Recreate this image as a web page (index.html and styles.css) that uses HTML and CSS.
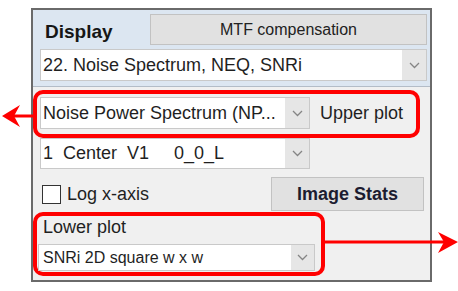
FILE: index.html
```html
<!DOCTYPE html>
<html>
<head>
	<title>Display panel</title>
	<link rel="stylesheet" href="styles.css">
</head>
<body>

	<!-- Control panel -->
	<div class="panel">

		<div class="top">
			<div class="row-head">
				<span class="title">Display</span>
				<div class="button button-mtf">MTF compensation</div>
			</div>
			<div class="select select-main">
				<span class="select-text">22. Noise Spectrum, NEQ, SNRi</span>
				<span class="select-arrow"><svg width="11" height="7" viewBox="0 0 11 7"><polyline points="1,1 5.5,5.5 10,1" fill="none" stroke="#858585" stroke-width="1.3"/></svg></span>
			</div>
		</div>

		<div class="mark mark-upper">
			<div class="select select-upper">
				<span class="select-text">Noise Power Spectrum (NP...</span>
				<span class="select-arrow"><svg width="11" height="7" viewBox="0 0 11 7"><polyline points="1,1 5.5,5.5 10,1" fill="none" stroke="#858585" stroke-width="1.3"/></svg></span>
			</div>
			<span class="label">Upper plot</span>
		</div>

		<div class="select select-roi">
			<span class="select-text">1  Center  V1     0_0_L</span>
			<span class="select-arrow"><svg width="11" height="7" viewBox="0 0 11 7"><polyline points="1,1 5.5,5.5 10,1" fill="none" stroke="#858585" stroke-width="1.3"/></svg></span>
		</div>

		<div class="row-check">
			<span class="checkbox"></span>
			<span class="label check-label">Log x-axis</span>
			<div class="button button-stats">Image Stats</div>
		</div>

		<div class="mark mark-lower">
			<div class="label lower-label">Lower plot</div>
			<div class="select select-lower">
				<span class="select-text">SNRi 2D square w x w</span>
				<span class="select-arrow"><svg width="11" height="7" viewBox="0 0 11 7"><polyline points="1,1 5.5,5.5 10,1" fill="none" stroke="#858585" stroke-width="1.3"/></svg></span>
			</div>
		</div>

	</div>

	<!-- Annotation arrows drawn over the page -->
	<svg class="arrows" width="458" height="291" viewBox="0 0 458 291">
		<line x1="14" y1="116" x2="34" y2="116" stroke="#ff0000" stroke-width="3"/>
		<polygon points="2,116 20,105 14,116 20,127" fill="#ff0000"/>
		<line x1="324" y1="242" x2="446" y2="242" stroke="#ff0000" stroke-width="3"/>
		<polygon points="458,242 438,232 444,242 438,253" fill="#ff0000"/>
	</svg>

</body>
</html>
```

FILE: styles.css
```css
body {
	margin: 0;
	font-family: "Liberation Sans", Arial, sans-serif;
	color: #1f1f1f;
	background-color: #ffffff;
	position: relative;
	width: 458px;
	height: 291px;
	overflow: hidden;
}

.panel {
	box-sizing: border-box;
	width: 401px;
	height: 274px;
	margin: 8px 0 0 31px;
	border: 2px solid #6a6a6a;
	background-color: #f0f0f0;
}

.top {
	box-sizing: border-box;
	height: 77px;
	padding: 4px 3px 0 7px;
	background-color: #dce6f1;
	border-bottom: 1px solid #b3bcc7;
}

.row-head {
	display: flex;
	height: 31px;
}

.title {
	flex: 1;
	margin: 7px 0 0 5px;
	font-size: 19px;
	font-weight: bold;
	color: #161616;
}

.button {
	box-sizing: border-box;
	display: flex;
	align-items: center;
	justify-content: center;
	background-color: #e1e1e1;
	border: 1px solid #c2c2c2;
	color: #222222;
}

.button-mtf {
	width: 277px;
	height: 31px;
	font-size: 16px;
}

.button-stats {
	width: 153px;
	height: 34px;
	margin-left: auto;
	margin-right: 6px;
	font-size: 18px;
	font-weight: bold;
	color: #1c1c30;
}

.select {
	box-sizing: border-box;
	display: flex;
	background-color: #ffffff;
	border: 1px solid #c9c9c9;
}

.select-text {
	flex: 1;
	display: flex;
	align-items: center;
	padding-left: 2px;
	font-size: 18px;
	white-space: pre;
	overflow: hidden;
}

.select-arrow {
	width: 24px;
	display: flex;
	align-items: center;
	justify-content: center;
	background-color: #e6e6e6;
}

.select-main {
	height: 32px;
	margin-top: 4px;
}

.mark {
	box-sizing: border-box;
	border: 4px solid #ff0000;
	border-radius: 10px;
}

.mark-upper {
	display: flex;
	align-items: center;
	width: 387px;
	height: 48px;
	margin-top: 3px;
	padding: 0 0 2px 3px;
}

.select-upper {
	width: 270px;
	height: 32px;
}

.label {
	font-size: 18px;
}

.mark-upper .label {
	margin-left: 10px;
}

.select-roi {
	width: 270px;
	height: 31px;
	margin-left: 7px;
}

.row-check {
	display: flex;
	align-items: center;
	height: 34px;
	margin-top: 8px;
}

.checkbox {
	box-sizing: border-box;
	width: 19px;
	height: 19px;
	margin-left: 9px;
	background-color: #ffffff;
	border: 1px solid #333333;
}

.check-label {
	margin-left: 6px;
}

.mark-lower {
	width: 292px;
	height: 64px;
	margin-top: 1px;
	padding: 1px 0 0 1px;
}

.lower-label {
	line-height: 20px;
	padding-left: 5px;
}

.select-lower {
	width: 277px;
	height: 27px;
	margin-top: 7px;
}

.select-lower .select-text {
	font-size: 16px;
	padding-left: 4px;
}

.select-lower .select-arrow {
	width: 23px;
}

.arrows {
	position: absolute;
	top: 0;
	left: 0;
	pointer-events: none;
}
```
